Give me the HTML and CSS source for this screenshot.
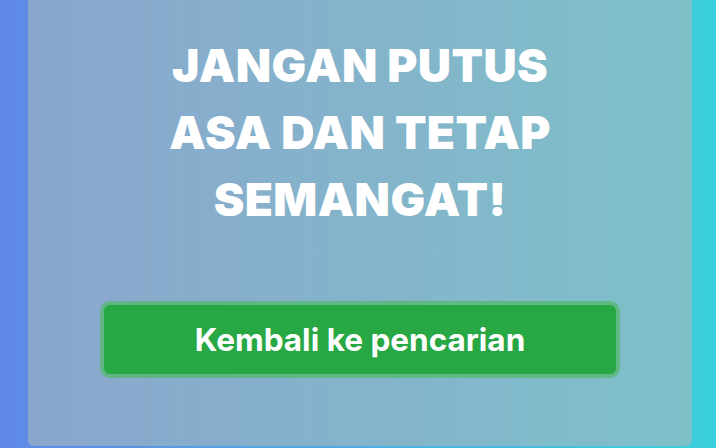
FILE: index.html
```html
<!DOCTYPE html>
<html lang="id">
<head>
<meta charset="utf-8">
<title>Jangan Putus Asa</title>
<link rel="stylesheet" href="styles.css">
</head>
<body>
<div class="page">
  <div class="card">
    <h1 class="title">JANGAN PUTUS<br>ASA DAN TETAP<br>SEMANGAT!</h1>
    <button class="btn" type="button">Kembali ke pencarian</button>
  </div>
</div>
</body>
</html>
```
FILE: styles.css
```css
html, body {
  margin: 0;
  padding: 0;
  height: 100%;
}
body {
  background: linear-gradient(90deg, #5f89e7 0%, #3bd0dc 100%);
  font-family: Inter, "Noto Sans", sans-serif;
  overflow: hidden;
}
.page {
  height: 446px;
  padding: 0 24px 0 28px;
  display: flex;
}
.card {
  flex: 1;
  background: linear-gradient(90deg, #8aa6cd 0%, #7ec1c9 100%);
  border-radius: 0 0 6px 6px;
  display: flex;
  flex-direction: column;
  align-items: center;
  padding: 32px 76px 0;
}
.title {
  margin: 0;
  color: #fff;
  font-weight: 900;
  font-size: 46px;
  line-height: 67px;
  text-align: center;
  letter-spacing: 0.4px;
}
.btn {
  margin-top: 72px;
  align-self: stretch;
  height: 69px;
  border: none;
  border-radius: 6px;
  background: #28a745;
  color: #fff;
  font-family: Inter, "Noto Sans", sans-serif;
  font-weight: 700;
  font-size: 31.5px;
  box-shadow: 0 0 0 4px rgba(84, 184, 110, 0.75);
  cursor: pointer;
}
```
